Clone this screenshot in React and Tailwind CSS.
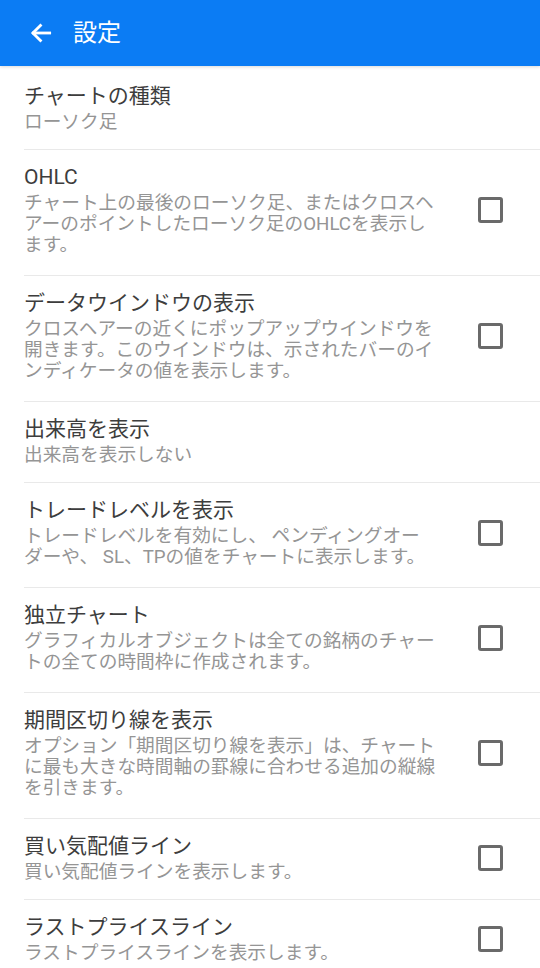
import React from 'react';

const settings = [
  { title: 'チャートの種類', lines: ['ローソク足'], checkbox: false },
  {
    title: 'OHLC',
    lines: ['チャート上の最後のローソク足、またはクロスヘ', 'アーのポイントしたローソク足のOHLCを表示し', 'ます。'],
    checkbox: true,
  },
  {
    title: 'データウインドウの表示',
    lines: ['クロスヘアーの近くにポップアップウインドウを', '開きます。このウインドウは、示されたバーのイ', 'ンディケータの値を表示します。'],
    checkbox: true,
  },
  { title: '出来高を表示', lines: ['出来高を表示しない'], checkbox: false },
  {
    title: 'トレードレベルを表示',
    lines: ['トレードレベルを有効にし、 ペンディングオー', 'ダーや、 SL、TPの値をチャートに表示します。'],
    checkbox: true,
  },
  {
    title: '独立チャート',
    lines: ['グラフィカルオブジェクトは全ての銘柄のチャー', 'トの全ての時間枠に作成されます。'],
    checkbox: true,
  },
  {
    title: '期間区切り線を表示',
    lines: ['オプション「期間区切り線を表示」は、チャート', 'に最も大きな時間軸の罫線に合わせる追加の縦線', 'を引きます。'],
    checkbox: true,
  },
  { title: '買い気配値ライン', lines: ['買い気配値ラインを表示します。'], checkbox: true },
  { title: 'ラストプライスライン', lines: ['ラストプライスラインを表示します。'], checkbox: true },
];

const SettingRow = ({ item, first }) => {
  const multi = item.lines.length > 1;
  return (
    <div className="ml-[24px] border-b border-[#e9e9e9]">
      <div
        className={`flex items-center pr-[37px] ${first ? 'pt-[17px]' : 'pt-[14px]'} ${multi ? 'pb-[19px]' : 'pb-[16px]'}`}
      >
        <div className="flex-1 min-w-0 whitespace-nowrap">
          <div className="text-[21px] leading-[26px] text-[#3d3d3d]">{item.title}</div>
          <div className="mt-[3px] text-[18.7px] leading-[21px] text-[#959595]">
            {item.lines.map((l, i) => (
              <div key={i}>{l}</div>
            ))}
          </div>
        </div>
        {item.checkbox && (
          <div className="w-[25px] h-[26px] border-[3px] border-[#6a6a6a] rounded-[3px] shrink-0" />
        )}
      </div>
    </div>
  );
};

export default function App() {
  return (
    <div
      className="w-[540px] h-[968px] overflow-hidden bg-white"
      style={{ fontFamily: 'Roboto, "Noto Sans CJK JP", sans-serif' }}
    >
      {/* App bar */}
      <div className="h-[66px] bg-[#0b7cf4] flex items-center pl-[28px] shadow-[0_1px_3px_rgba(0,0,0,0.15)]">
        <svg width="26" height="26" viewBox="0 0 24 24" fill="none" stroke="white" strokeWidth="2.6" strokeLinecap="square">
          <path d="M20 12H5" />
          <path d="M11.5 5L4.5 12l7 7" />
        </svg>
        <span className="ml-[19px] text-[24px] leading-none text-white">設定</span>
      </div>

      {/* Settings list */}
      <div>
        {settings.map((item, i) => (
          <SettingRow key={i} item={item} first={i === 0} />
        ))}
      </div>
    </div>
  );
}
